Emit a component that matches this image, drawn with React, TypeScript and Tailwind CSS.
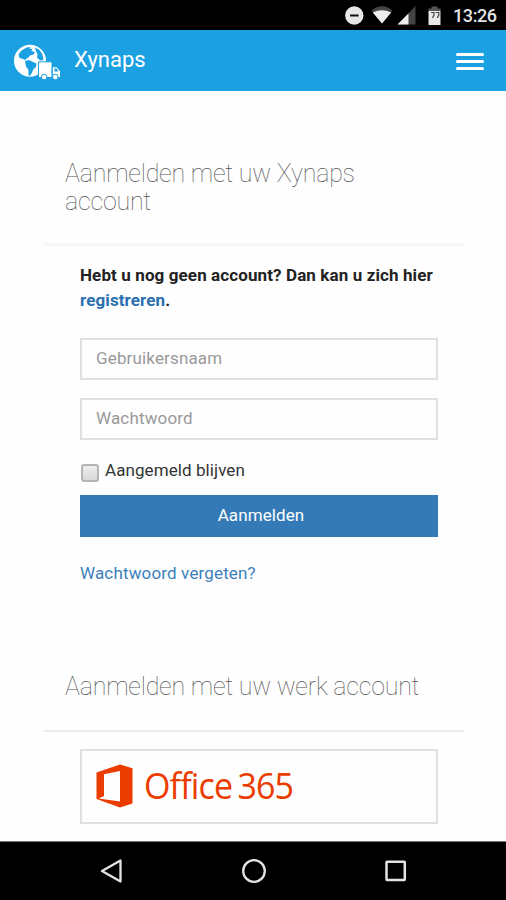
import type { ReactNode } from "react";

function StatusBar() {
  return (
    <div className="flex h-[30px] shrink-0 items-center bg-black pl-[345px] text-[#e4e4e4]">
      <svg className="h-[30px] w-[100px] shrink-0" viewBox="345 0 100 30">
        <circle cx="354.300" cy="15.500" r="9.200" fill="#e8e8e8" />
        <path d="M350 15.500h8.600" stroke="#111" strokeWidth="2" />
        <path d="M371.500 10.500Q382 2 392.500 10.500L382 23.500Z" fill="#444" />
        <path d="M372.800 12.500Q382 8 391.200 12.500L382 23.500Z" fill="#eee" />
        <path d="M415.500 6v18.500H397.500Z" fill="#444" />
        <path d="M408.500 13.500v11H397.500Z" fill="#eee" />
        <path d="M428.500 11V8.500h3V6.500h6v2h3V11Z" fill="#555" />
        <path d="M428.500 11h12v14h-12Z" fill="#e8e8e8" />
        <path
          d="M431 12.500h3v2.500l-1.500 3M435.800 12.500h3v2.500l-1.500 3"
          fill="none"
          stroke="#444"
          strokeWidth="1.200"
        />
      </svg>
      <span className="ml-[8px] pt-[1px] text-[18px] leading-[30px] font-medium tracking-[-0.400px]">
        13:26
      </span>
    </div>
  );
}

function GlobeTruck() {
  return (
    <svg className="h-[40px] w-[48px]" viewBox="13 41 48 40">
      <circle cx="30" cy="60.700" r="16" fill="#fff" />
      <g fill="#1ba1e2">
        <path d="M18.500 54.500l3-4 5-3 4-.5-1 2 3-.5-1 2.500 3.500 1-1.500 2.500-3.500 1-2 2.500-2.500 1 .5 1.500-3-1.500-3.500-1Z" />
        <path d="M25 61l4-1 3 1.500 4.500 2-.5 3.500-2.500 2-1.500 3.500-2 3.500-1.500-1v-5l-2.500-3.500Z" />
        <path d="M35 47.300l4.500 2.700 3 4.500 1 5.500-3.500.5-3-3 .5-3.500-1.500-2.500Z" />
      </g>
      <g fill="#fff" stroke="#1ba1e2" strokeWidth="1">
        <path d="M38.500 61.800h13.500V77.500h-13.500Z" />
        <path d="M52.300 66.800h4.500l3.700 4.700V77.500h-8.200Z" />
        <circle cx="44.200" cy="77" r="2.800" />
        <circle cx="55.300" cy="77" r="2.800" />
      </g>
      <path d="M54.500 68.500h2l1.800 3h-3.800Z" fill="#1ba1e2" />
    </svg>
  );
}

function Header() {
  return (
    <header className="flex h-[61px] shrink-0 items-center bg-[#1ba1e2] pr-[22px] pl-[13px] text-white">
      <GlobeTruck />
      <span className="mb-[2px] ml-[13px] text-[22px] leading-[28px]">Xynaps</span>
      <button className="mt-[1px] ml-auto flex w-[28px] flex-col gap-[4px]" aria-label="Menu">
        <span className="h-[3px] rounded-full bg-white" />
        <span className="h-[3px] rounded-full bg-white" />
        <span className="h-[3px] rounded-full bg-white" />
      </button>
    </header>
  );
}

function Heading({ children }: { children: ReactNode }) {
  return (
    <h2 className="pl-[21px] text-[25px] leading-[28px] font-thin tracking-[-0.220px] text-[#555]">
      {children}
    </h2>
  );
}

function Field({ type, placeholder }: { type: string; placeholder: string }) {
  return (
    <input
      type={type}
      placeholder={placeholder}
      className="block h-[42px] w-full border-2 border-[#e0e0e0] px-[14px] pb-[3px] text-[17px] tracking-[0.150px] placeholder:text-[#999]"
    />
  );
}

function OfficeLogo() {
  return (
    <svg className="h-[44px] w-[38px] shrink-0" viewBox="96 764 38 44">
      <path
        fillRule="evenodd"
        d="M96.500 772.500L120 764.500l12.500 3.700v35.300L120 807.500l-23.500-8.500Zm7.500 1.800v21.700l-5.500 2.500 21.500 3v-30.500Z"
        fill="#eb3c00"
      />
    </svg>
  );
}

function NavBar() {
  return (
    <nav className="flex h-[59px] shrink-0 items-center justify-between border-t border-[#777] bg-black pr-[99px] pl-[98px]">
      <svg className="h-[28px] w-[26px]" viewBox="0 0 26 28" fill="none" stroke="#e4e4e4" strokeWidth="2.300">
        <path d="M4 14L22.500 3.500v21Z" strokeLinejoin="round" />
      </svg>
      <svg className="h-[28px] w-[28px]" viewBox="0 0 28 28" fill="none" stroke="#e4e4e4" strokeWidth="2.300">
        <circle cx="14" cy="14" r="10.800" />
      </svg>
      <svg className="h-[28px] w-[24px]" viewBox="0 0 24 28" fill="none" stroke="#e4e4e4" strokeWidth="2.500">
        <rect x="3.500" y="4.700" width="18.300" height="18.300" rx="0.500" />
      </svg>
    </nav>
  );
}

export default function App() {
  return (
    <div className="flex h-[900px] w-[506px] flex-col overflow-hidden bg-[#fefefe] font-['Roboto',sans-serif]">
      <StatusBar />
      <Header />
      <main className="min-h-0 flex-1 pt-[69px] pr-[42px] pl-[44px]">
        <Heading>
          Aanmelden met uw Xynaps
          <br />
          account
        </Heading>
        <hr className="mt-[27px] border-t-[3px] border-[#f6f6f6]" />

        <form className="mr-[26px] ml-[36px] pt-[17px]">
          <p className="text-[17px] leading-[25px] font-bold tracking-[0.110px] whitespace-nowrap text-[#222]">
            Hebt u nog geen account? Dan kan u zich hier
            <br />
            <a className="text-[#2a70b0]">registreren</a>.
          </p>
          <div className="mt-[25px] flex flex-col gap-[18px]">
            <Field type="text" placeholder="Gebruikersnaam" />
            <Field type="password" placeholder="Wachtwoord" />
          </div>
          <label className="mt-[17px] flex h-[26px] items-start text-[17px] leading-[26px] tracking-[0.080px] text-[#333]">
            <input
              type="checkbox"
              className="mt-[7px] ml-[1px] size-[18px] shrink-0 appearance-none rounded-[3px] border-2 border-[#b4b4b4] bg-linear-to-b from-[#eee] to-[#d8d8d8]"
            />
            <span className="ml-[6px]">Aangemeld blijven</span>
          </label>
          <button
            type="button"
            className="mt-[12px] block h-[42px] w-full bg-[#337ab7] pb-[1px] pl-[4px] text-[17px] tracking-[0.100px] text-white"
          >
            Aanmelden
          </button>
          <a className="mt-[23px] block text-[17px] leading-[26px] tracking-[0.150px] text-[#3c80ba]">
            Wachtwoord vergeten?
          </a>
        </form>

        <div className="mt-[87px]">
          <Heading>Aanmelden met uw werk account</Heading>
        </div>
        <hr className="mt-[29px] border-t-2 border-[#ebebeb]" />
        <div className="mt-[17px] mr-[26px] ml-[36px] flex h-[75px] items-center border-2 border-[#e0e0e0] pb-[1px] pl-[14px]">
          <OfficeLogo />
          <span className="mb-[1px] ml-[10px] origin-left scale-x-[0.945] font-['Open_Sans',sans-serif] text-[36px] tracking-[-0.900px] [word-spacing:-3px] whitespace-nowrap text-[#eb3c00]">
            Office 365
          </span>
        </div>
      </main>
      <NavBar />
    </div>
  );
}
